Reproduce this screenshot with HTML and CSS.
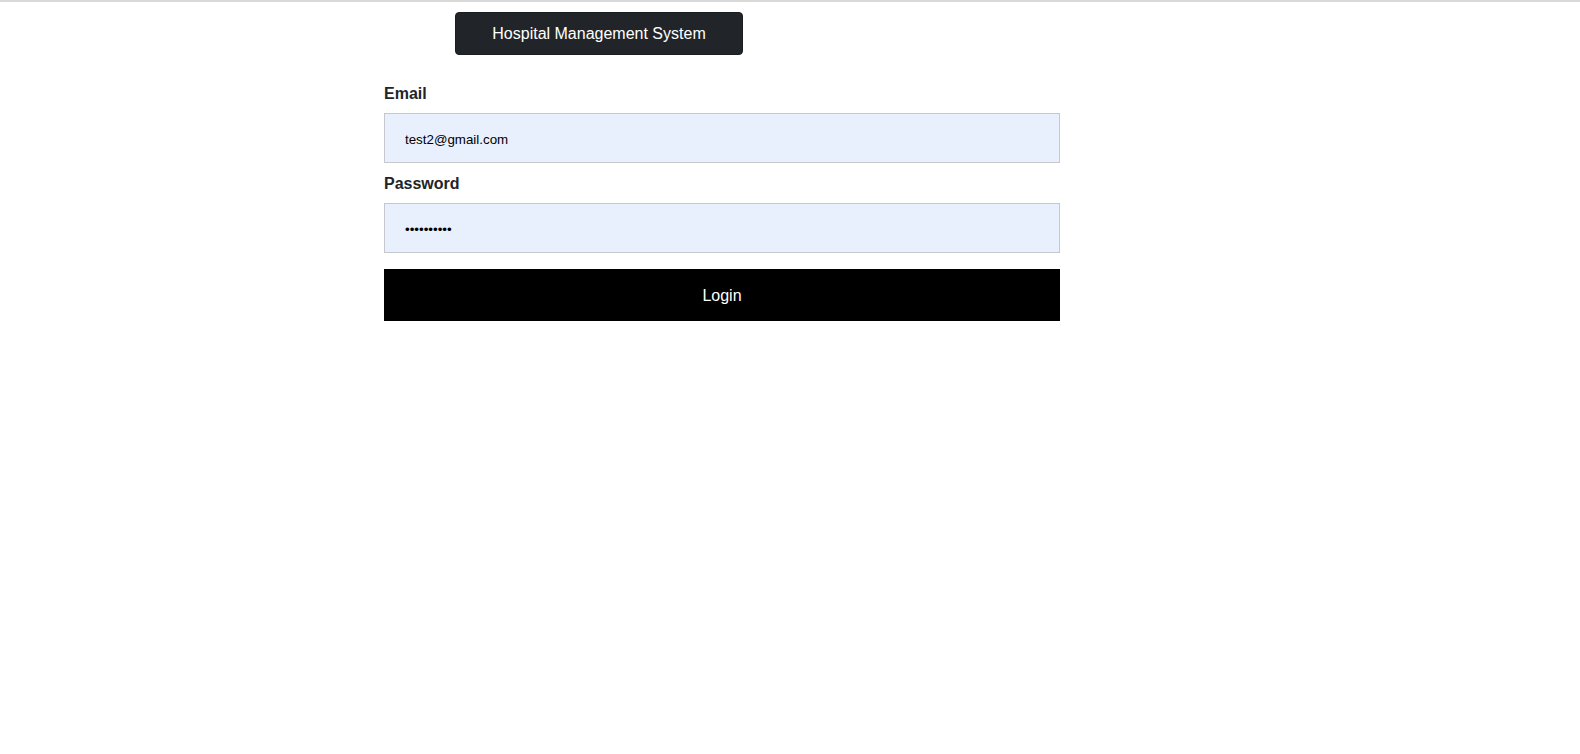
FILE: index.html
```html
<!DOCTYPE html>
<html lang="en">
<head>
<meta charset="utf-8">
<title>Hospital Management System</title>
<link rel="stylesheet" href="styles.css">
</head>
<body>
<div class="topline"></div>
<header class="header">
  <button class="brand" type="button">Hospital Management System</button>
</header>
<form class="login-form">
  <label class="field-label" for="email">Email</label>
  <input class="field-input" id="email" type="email" value="test2@gmail.com">
  <label class="field-label pw-label" for="password">Password</label>
  <input class="field-input" id="password" type="password" value="1234567890">
  <button class="login-btn" type="button">Login</button>
</form>
</body>
</html>
```

FILE: styles.css
```css
* { box-sizing: border-box; }
html, body {
  margin: 0;
  padding: 0;
  background: #fff;
  font-family: "Liberation Sans", Arial, sans-serif;
  color: #212529;
}
.topline {
  height: 2px;
  background: #d9d9d9;
}
.header {
  padding-top: 10px;
  padding-left: 455px;
}
.brand {
  display: block;
  width: 288px;
  height: 43px;
  margin: 0;
  background: #212529;
  border: 1px solid #1a1d20;
  border-radius: 4px;
  color: #fff;
  font-family: "Liberation Sans", Arial, sans-serif;
  font-size: 16px;
  line-height: 24px;
  padding: 1px 0 0;
}
.login-form {
  display: flex;
  flex-direction: column;
  width: 676px;
  margin: 27px 0 0 384px;
}
.field-label {
  font-size: 16px;
  line-height: 24px;
  font-weight: 700;
  color: #212529;
  margin-bottom: 7px;
}
.pw-label {
  margin-top: 9px;
  margin-bottom: 7px;
}
.field-input {
  height: 50px;
  width: 100%;
  margin: 0;
  padding: 2px 20px 0;
  border: 1px solid #c6c8ce;
  background: #e8f0fe;
  font-family: "Liberation Sans", Arial, sans-serif;
  font-size: 13.33px;
  color: #000;
  outline: none;
}
.login-btn {
  margin-top: 16px;
  height: 52px;
  width: 100%;
  background: #000;
  color: #fff;
  border: none;
  font-family: "Liberation Sans", Arial, sans-serif;
  font-size: 16px;
  padding: 1px 0 0;
}
```
